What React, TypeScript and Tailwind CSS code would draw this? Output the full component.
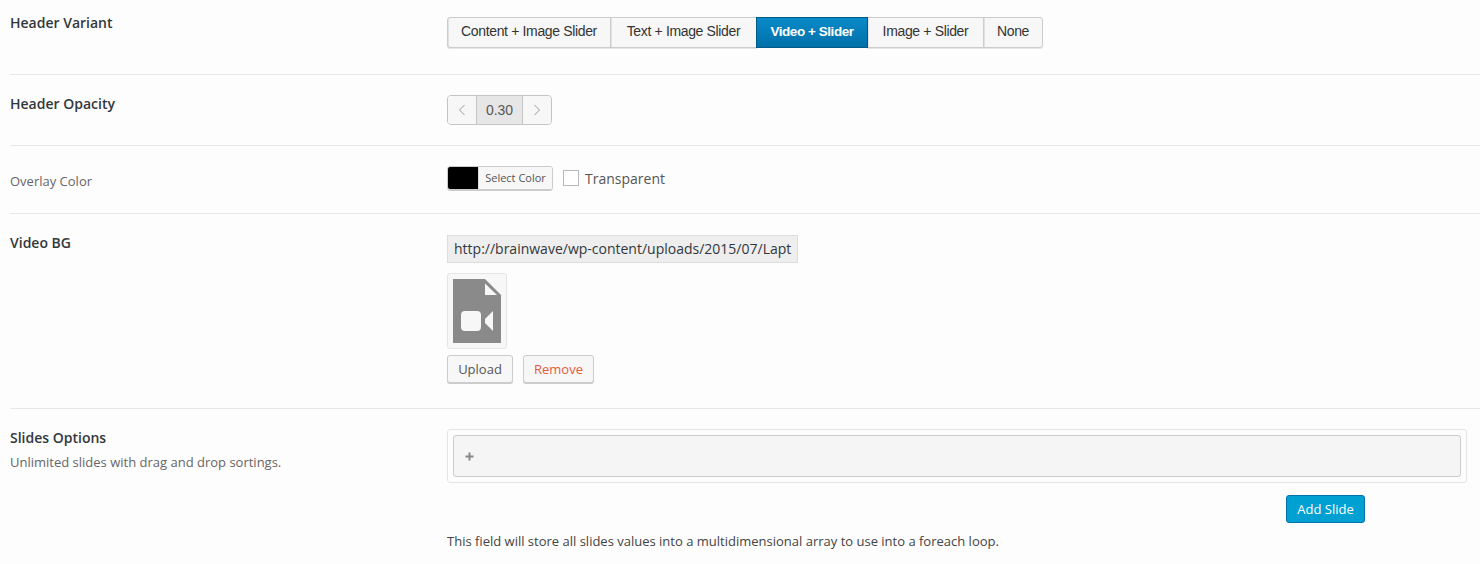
const sans = "font-['Open_Sans',sans-serif]";
const arial = "font-['Liberation_Sans',Arial,sans-serif]";

const variants = [
  { label: "Content + Image Slider", width: "w-[164px]" },
  { label: "Text + Image Slider", width: "w-[147px]" },
  { label: "Video + Slider", width: "w-[112px]", active: true },
  { label: "Image + Slider", width: "w-[117px]" },
  { label: "None", width: "w-[60px]" },
];

function Row({ children, height, last }: { children: React.ReactNode; height: string; last?: boolean }) {
  return (
    <div className={`flex ${height} ${last ? "" : "border-b border-[#e8e8e8]"}`}>{children}</div>
  );
}

function Label({ children, top }: { children: React.ReactNode; top: string }) {
  return (
    <div className={`w-[437px] shrink-0 ${top} text-[14px] leading-[18px] font-semibold text-[#32373c]`}>{children}</div>
  );
}

function VideoFileIcon() {
  return (
    <svg width="48" height="64" viewBox="0 0 48 64" className="block">
      <path d="M0 0H32L48 16V64H0Z" fill="#8a8a8a" />
      <path d="M32 4.5V16H44Z" fill="#f7f7f7" />
      <rect x="8" y="32" width="20" height="20" rx="4" fill="#f7f7f7" />
      <path d="M40 32V52L32 44V40Z" fill="#f7f7f7" />
    </svg>
  );
}

export default function App() {
  return (
    <div className={`min-h-[564px] w-[1480px] overflow-hidden bg-[#fdfdfd] pl-[10px] ${sans}`}>
      <Row height="h-[75px]">
        <Label top="pt-[14px]">Header Variant</Label>
        <div className="pt-[17px]">
          <div className={`flex h-[31px] ${arial} leading-[27px]`}>
            {variants.map((v, i) => (
              <div
                key={v.label}
                className={`${v.width} ${i > 0 ? "-ml-px" : ""} ${i === 0 ? "rounded-l-[3px]" : ""} ${i === variants.length - 1 ? "rounded-r-[3px]" : ""} border text-center ${
                  v.active
                    ? "relative z-10 border-[#005a87] bg-gradient-to-b from-[#0a8ac9] to-[#0070a8] text-[13.5px] tracking-[-0.45px] font-bold text-[#ffffff]"
                    : "border-[#cccccc] bg-[#f7f7f7] text-[14px] tracking-[-0.35px] text-[#333333] shadow-[0_1px_0_#e6e6e6,inset_1px_0_0_#e2e2e2]"
                }`}
              >
                {v.label}
              </div>
            ))}
          </div>
        </div>
      </Row>

      <Row height="h-[71px]">
        <Label top="pt-[20px]">Header Opacity</Label>
        <div className="pt-[20px]">
          <div className={`flex h-[30px] w-[105px] overflow-hidden rounded-[4px] border border-[#c4c4c4] ${arial} text-[14px] text-[#555555]`}>
            <div className="flex w-[28px] items-center justify-center bg-[#f7f7f7]">
              <svg width="8" height="12" viewBox="0 0 8 12" fill="none" stroke="#999999"><path d="M6.5 1L1.5 6L6.5 11" /></svg>
            </div>
            <div className="flex w-[47px] items-center justify-center border-x border-[#c4c4c4] bg-[#e6e6e6]">0.30</div>
            <div className="flex flex-1 items-center justify-center bg-[#f7f7f7]">
              <svg width="8" height="12" viewBox="0 0 8 12" fill="none" stroke="#999999"><path d="M1.5 1L6.5 6L1.5 11" /></svg>
            </div>
          </div>
        </div>
      </Row>

      <Row height="h-[68px]">
        <Label top="pt-[26px]"><span className="font-normal text-[13px] text-[#666666]">Overlay Color</span></Label>
        <div className="flex items-start pt-[20px]">
          <div className="flex h-[24px] w-[106px] overflow-hidden rounded-[3px] border border-[#cccccc] shadow-[0_1px_0_#cccccc]">
            <div className="w-[30px] bg-[#000000]" />
            <div className="flex-1 border-l border-[#dddddd] bg-[#f7f7f7] text-center text-[11px] leading-[22px] text-[#555555]">Select Color</div>
          </div>
          <div className="ml-[10px] mt-[4px] h-[16px] w-[16px] border border-[#b4b9be] bg-[#ffffff]" />
          <div className="ml-[6px] text-[14px] leading-[26px] text-[#555555]">Transparent</div>
        </div>
      </Row>

      <Row height="h-[195px]">
        <Label top="pt-[20px]">Video BG</Label>
        <div className="pt-[21px]">
          <div className="h-[28px] w-[351px] overflow-hidden whitespace-nowrap border border-[#dddddd] bg-[#eeeeee] pl-[6px] text-[14px] leading-[26px] text-[#32373c]">
            http://brainwave/wp-content/uploads/2015/07/Lapt
          </div>
          <div className="mt-[10px] h-[76px] w-[60px] rounded-[3px] border border-[#e5e5e5] bg-[#f7f7f7] p-[5px]">
            <VideoFileIcon />
          </div>
          <div className="mt-[6px] flex gap-[10px] text-[13px] leading-[26px]">
            <div className="h-[28px] w-[66px] rounded-[3px] border border-[#cccccc] bg-[#f7f7f7] text-center text-[#555555] shadow-[0_1px_0_#cccccc]">Upload</div>
            <div className="h-[28px] w-[71px] rounded-[3px] border border-[#cccccc] bg-[#f7f7f7] text-center text-[#e35b3b] shadow-[0_1px_0_#cccccc]">Remove</div>
          </div>
        </div>
      </Row>

      <Row height="h-[155px]" last>
        <div className="w-[437px] shrink-0 pt-[20px]">
          <div className="text-[14px] leading-[18px] font-semibold text-[#32373c]">Slides Options</div>
          <div className="mt-[6px] text-[13px] leading-[18px] text-[#666666]">Unlimited slides with drag and drop sortings.</div>
        </div>
        <div className="w-[1020px] pt-[20px]">
          <div className="h-[54px] rounded-[3px] border border-[#e5e5e5] p-[5px]">
            <div className="flex h-[42px] items-center rounded-[3px] border border-[#cccccc] bg-[#f5f5f5] pl-[11px]">
              <svg width="9" height="9" viewBox="0 0 9 9" fill="#888888"><path d="M3.5 0.5H5.5V3.5H8.5V5.5H5.5V8.5H3.5V5.5H0.5V3.5H3.5Z" /></svg>
            </div>
          </div>
          <div className="mt-[12px] flex justify-end pr-[102px]">
            <div className="h-[28px] w-[79px] rounded-[3px] border border-[#0073aa] bg-[#00a0d2] text-center text-[13px] leading-[26px] text-[#ffffff]">Add Slide</div>
          </div>
          <div className="mt-[9px] text-[13px] leading-[18px] text-[#444444]">This field will store all slides values into a multidimensional array to use into a foreach loop.</div>
        </div>
      </Row>
    </div>
  );
}
